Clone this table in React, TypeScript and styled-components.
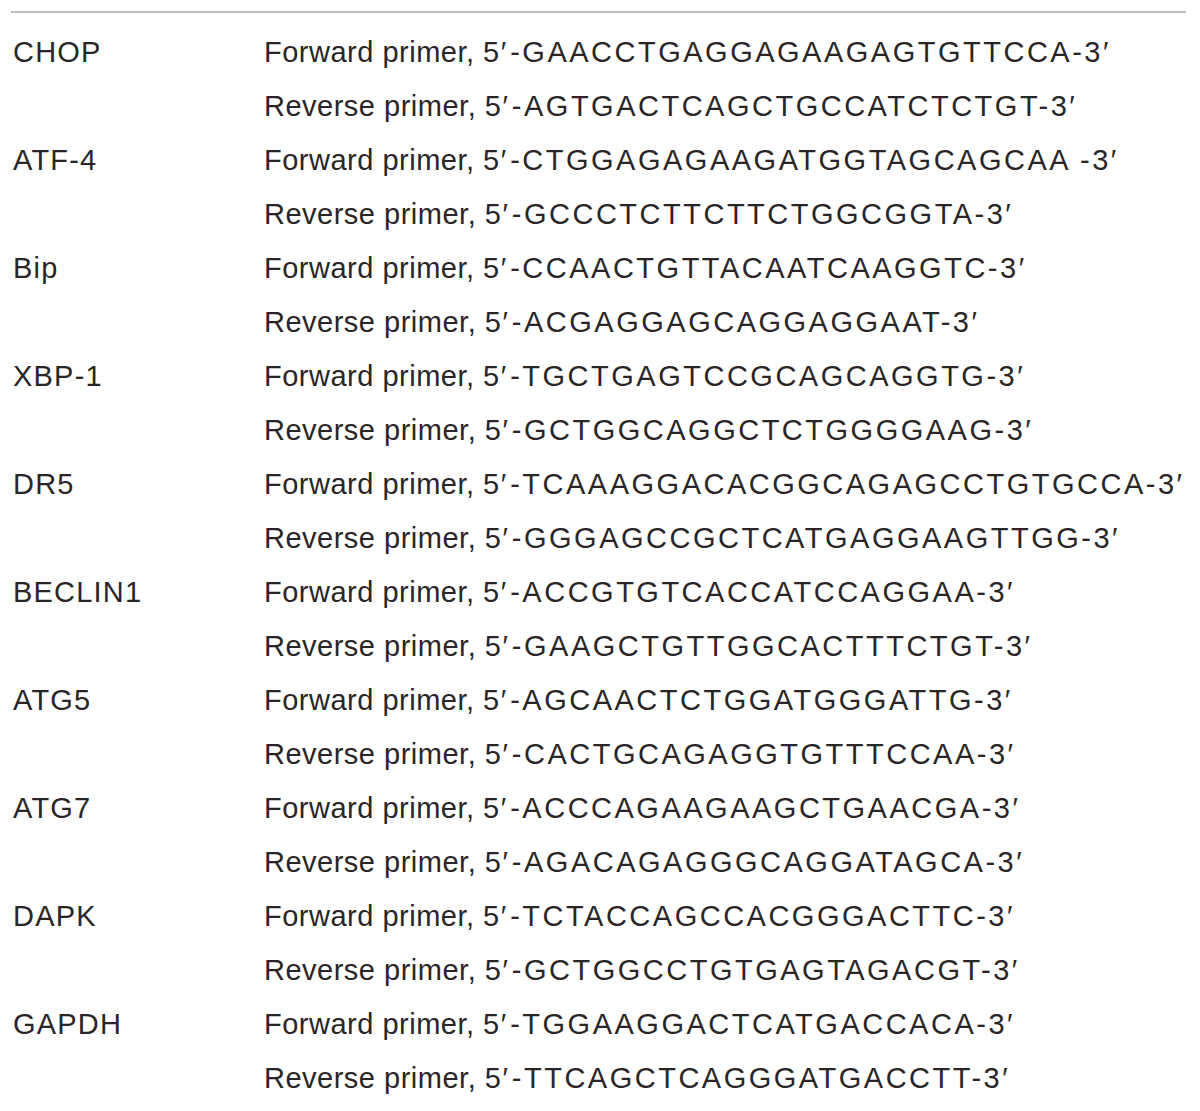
import React from 'react';
import styled, { createGlobalStyle } from 'styled-components';

const GlobalStyle = createGlobalStyle`
  html, body {
    margin: 0;
    padding: 0;
    background: #ffffff;
  }
`;

interface Gene {
  name: string;
  forward: string;
  reverse: string;
}

const genes: Gene[] = [
  { name: 'CHOP', forward: 'GAACCTGAGGAGAAGAGTGTTCCA', reverse: 'AGTGACTCAGCTGCCATCTCTGT' },
  { name: 'ATF-4', forward: 'CTGGAGAGAAGATGGTAGCAGCAA ', reverse: 'GCCCTCTTCTTCTGGCGGTA' },
  { name: 'Bip', forward: 'CCAACTGTTACAATCAAGGTC', reverse: 'ACGAGGAGCAGGAGGAAT' },
  { name: 'XBP-1', forward: 'TGCTGAGTCCGCAGCAGGTG', reverse: 'GCTGGCAGGCTCTGGGGAAG' },
  { name: 'DR5', forward: 'TCAAAGGACACGGCAGAGCCTGTGCCA', reverse: 'GGGAGCCGCTCATGAGGAAGTTGG' },
  { name: 'BECLIN1', forward: 'ACCGTGTCACCATCCAGGAA', reverse: 'GAAGCTGTTGGCACTTTCTGT' },
  { name: 'ATG5', forward: 'AGCAACTCTGGATGGGATTG', reverse: 'CACTGCAGAGGTGTTTCCAA' },
  { name: 'ATG7', forward: 'ACCCAGAAGAAGCTGAACGA', reverse: 'AGACAGAGGGCAGGATAGCA' },
  { name: 'DAPK', forward: 'TCTACCAGCCACGGGACTTC', reverse: 'GCTGGCCTGTGAGTAGACGT' },
  { name: 'GAPDH', forward: 'TGGAAGGACTCATGACCACA', reverse: 'TTCAGCTCAGGGATGACCTT' },
];

const Table = styled.div`
  margin: 11px 14px 0 11px;
  border-top: 2px solid #bdbdbd;
  padding: 12px 0 0 2px;
  display: grid;
  grid-template-columns: 251px 1fr;
  font-family: 'Liberation Sans', Arial, sans-serif;
  font-size: 29px;
  color: #2a2627;
`;

const Cell = styled.div`
  height: 54px;
  line-height: 54px;
  white-space: pre;
`;

const Name = styled(Cell)`
  letter-spacing: 1.2px;
`;

const Label = styled.span`
  letter-spacing: 0.5px;
`;

const Prime = styled.span`
  margin-left: 1px;
  margin-right: 4px;
`;

const Seq = styled.span`
  letter-spacing: 2.5px;
`;

const Primer: React.FC<{ dir: string; seq: string }> = ({ dir, seq }) => (
  <Cell>
    <Label>{dir} primer, 5</Label>
    <Prime>′</Prime>
    <Seq>-{seq}-3′</Seq>
  </Cell>
);

export default function App() {
  return (
    <>
      <GlobalStyle />
      <Table>
        {genes.map((g) => (
          <React.Fragment key={g.name}>
            <Name>{g.name}</Name>
            <Primer dir="Forward" seq={g.forward} />
            <Cell />
            <Primer dir="Reverse" seq={g.reverse} />
          </React.Fragment>
        ))}
      </Table>
    </>
  );
}
